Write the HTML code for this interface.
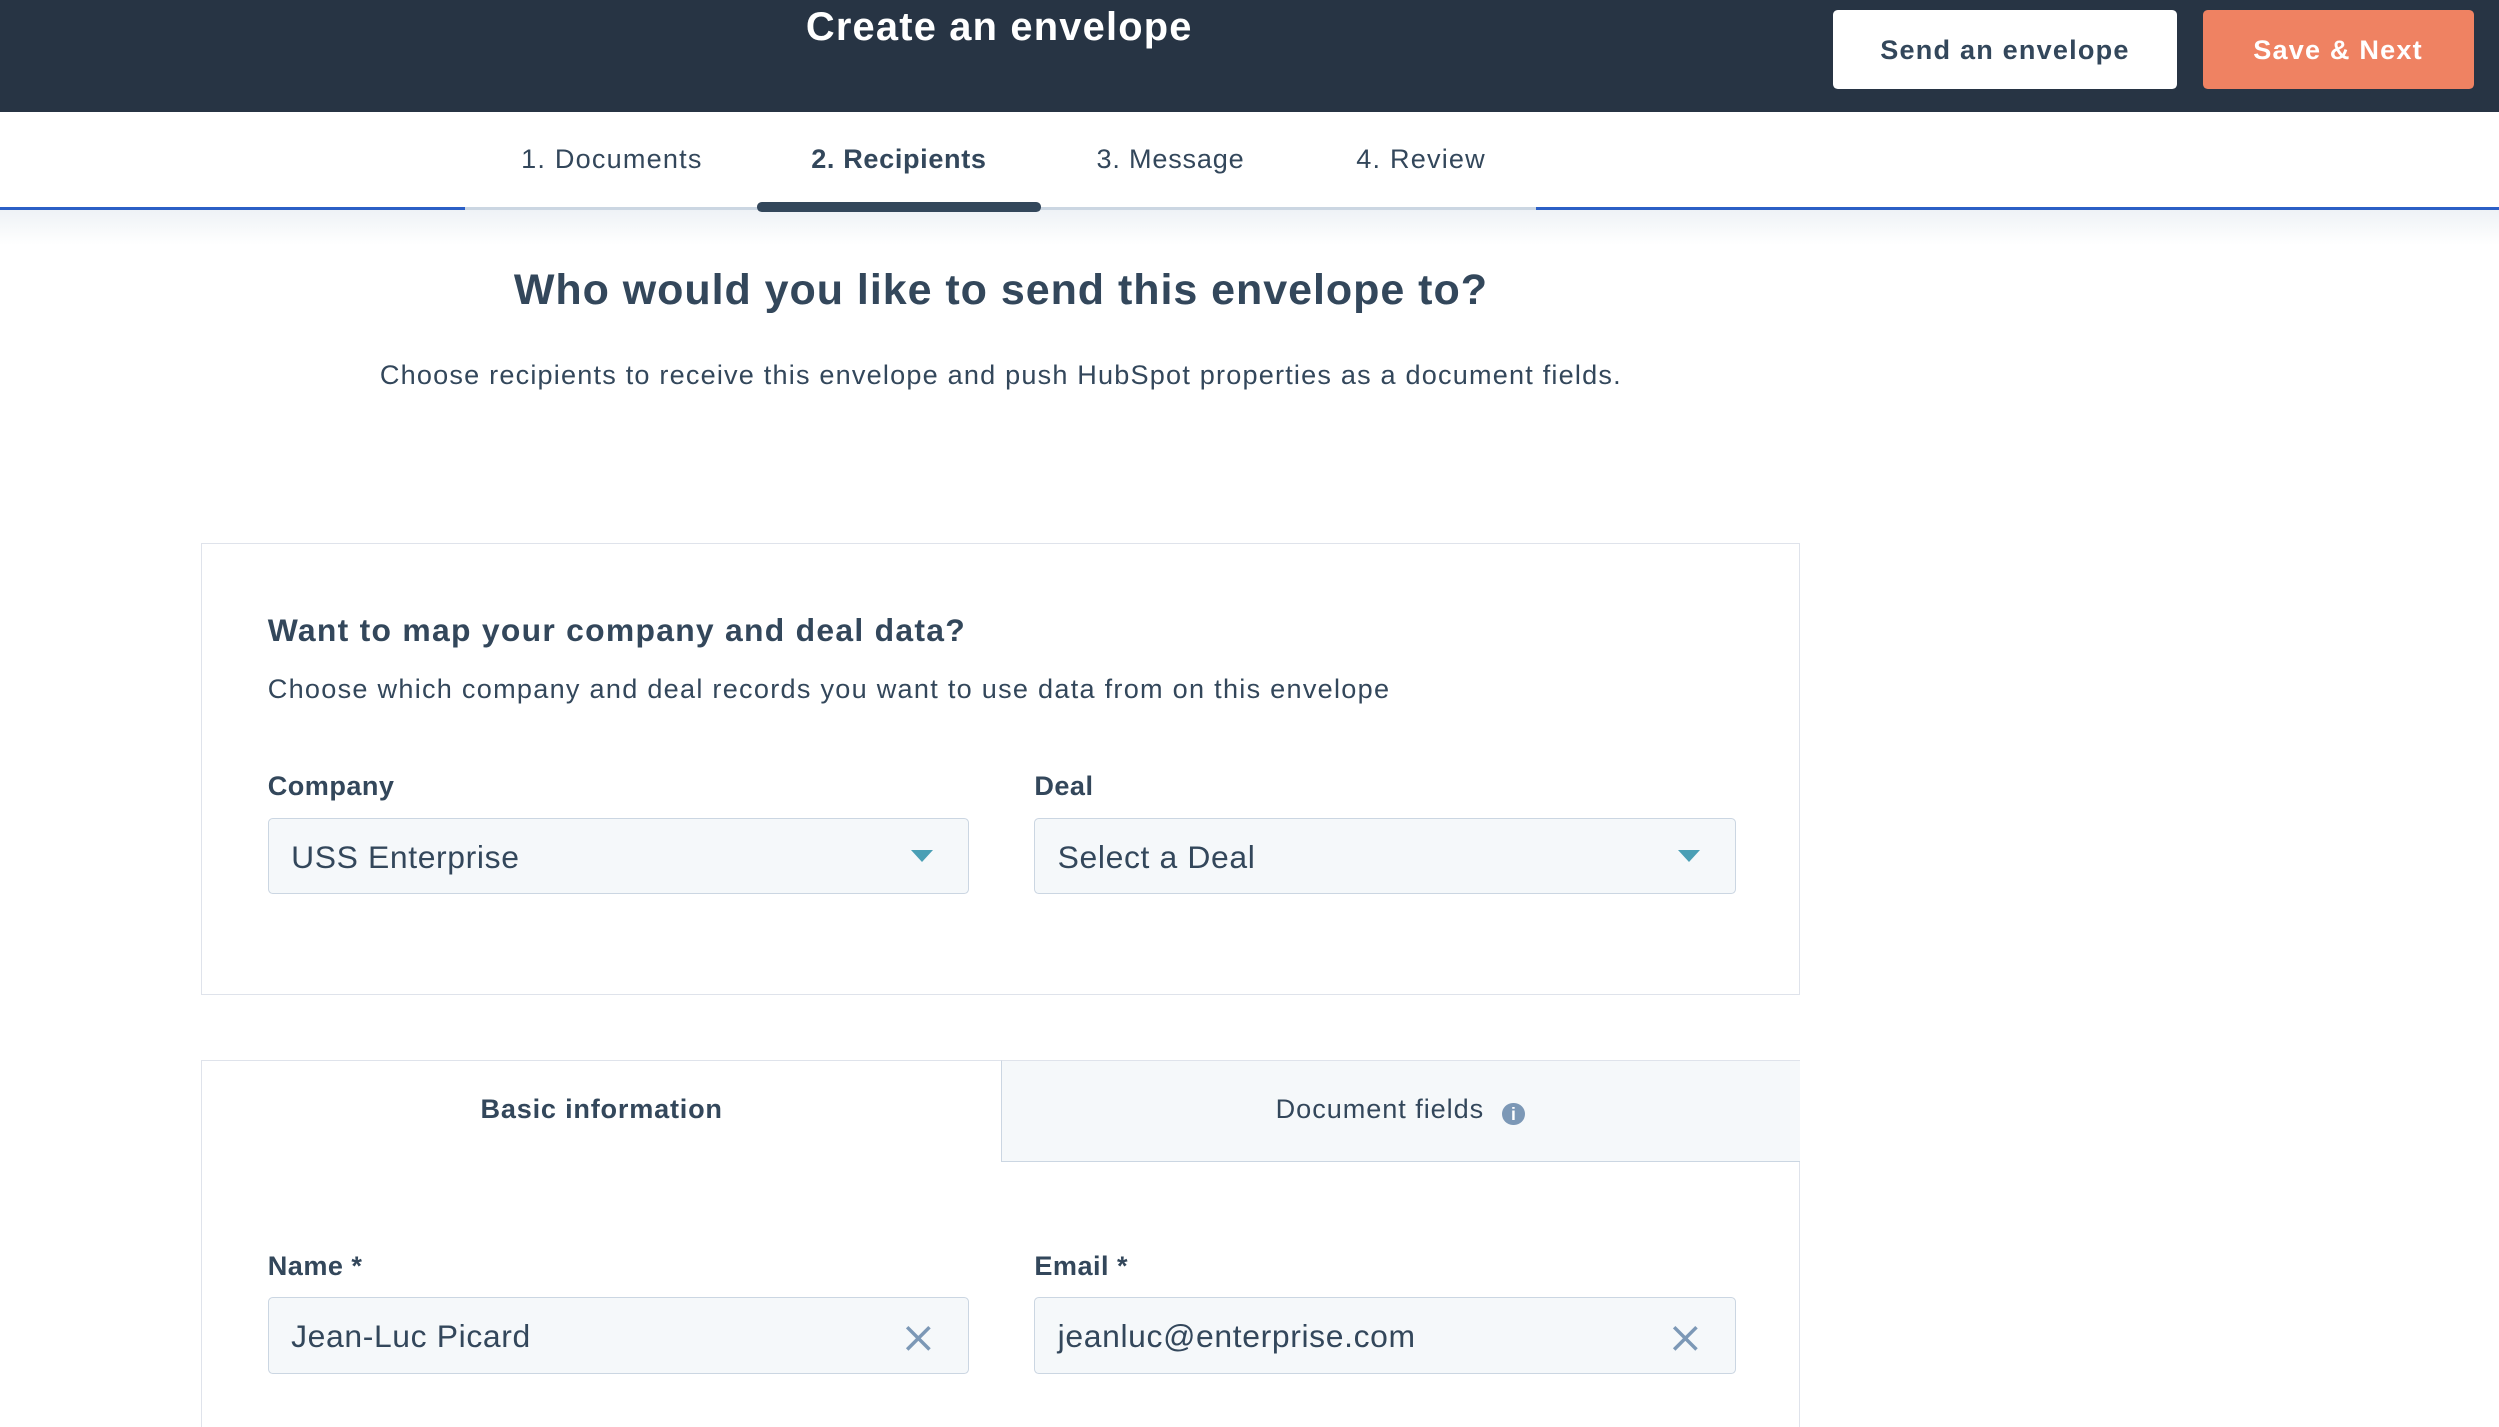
<!DOCTYPE html>
<html><head><meta charset="utf-8"><style>
html,body{margin:0;padding:0;}
body{width:2499px;height:1405px;overflow:hidden;background:#fff;font-family:"Liberation Sans",sans-serif;color:#33475b;letter-spacing:0.75px;}
#w{zoom:1.59375;width:1568px;height:882px;position:relative;}
.a{position:absolute;}
.hdr{left:0;top:0;width:1568px;height:70px;background:#273444;}
.btn{border-radius:3px;font-weight:bold;font-size:17px;text-align:center;line-height:50px;height:50px;top:6px;}
.tab{top:90px;font-size:17px;color:#33475b;}
.lbl{font-size:17px;font-weight:bold;color:#33475b;}
.inp{height:48px;background:#f5f8fa;border:1px solid #cbd6e2;border-radius:3px;font-size:20px;line-height:48px;text-indent:14px;color:#33475b;box-sizing:border-box;letter-spacing:0.4px;}
.tri{width:0;height:0;border-left:7px solid transparent;border-right:7px solid transparent;border-top:8px solid #4a9fb5;top:20px;right:22px;}
</style></head><body><div id="w">
<div class="a hdr"></div>
<div class="a" style="left:476px;top:3px;width:302px;text-align:center;color:#fff;font-size:25px;font-weight:bold;">Create an envelope</div>
<div class="a btn" style="left:1150px;width:216px;background:#fff;color:#33475b;">Send an envelope</div>
<div class="a btn" style="left:1382px;width:170px;background:#ef8262;color:#fff;">Save &amp; Next</div>

<div class="a tab" style="left:327px;">1. Documents</div>
<div class="a tab" style="left:509px;font-weight:bold;letter-spacing:0.4px;">2. Recipients</div>
<div class="a tab" style="left:688px;letter-spacing:0.5px;">3. Message</div>
<div class="a tab" style="left:851px;">4. Review</div>
<div class="a" style="left:0;top:132px;width:1568px;height:22px;background:linear-gradient(#eef2f6,#fff);"></div>
<div class="a" style="left:0;top:130px;width:292px;height:2px;background:#2b5fc6;"></div>
<div class="a" style="left:292px;top:130px;width:672px;height:2px;background:#cbd6e2;"></div>
<div class="a" style="left:964px;top:130px;width:604px;height:2px;background:#2b5fc6;"></div>
<div class="a" style="left:475px;top:127px;width:178px;height:6px;background:#33475b;border-radius:3px;"></div>

<div class="a" style="left:0;width:1256px;top:167px;text-align:center;font-size:27px;font-weight:bold;color:#33475b;letter-spacing:0.6px;">Who would you like to send this envelope to?</div>
<div class="a" style="left:0;width:1256px;top:225px;text-align:center;font-size:17px;letter-spacing:0.75px;">Choose recipients to receive this envelope and push HubSpot properties as a document fields.</div>

<div class="a" style="left:126px;top:341px;width:1002px;height:282px;border:1px solid #dfe3eb;"></div>
<div class="a" style="left:168px;top:384px;font-size:20px;font-weight:bold;letter-spacing:0.8px;">Want to map your company and deal data?</div>
<div class="a" style="left:168px;top:422px;font-size:17px;letter-spacing:0.8px;">Choose which company and deal records you want to use data from on this envelope</div>
<div class="a lbl" style="left:168px;top:483px;letter-spacing:0.3px;">Company</div>
<div class="a lbl" style="left:649px;top:483px;letter-spacing:0.3px;">Deal</div>
<div class="a inp" style="left:168px;top:513px;width:440px;">USS Enterprise<div class="a tri"></div></div>
<div class="a inp" style="left:649px;top:513px;width:440px;">Select a Deal<div class="a tri"></div></div>

<div class="a" style="left:126px;top:665px;width:1002px;height:230px;border:1px solid #dfe3eb;border-bottom:none;"></div>
<div class="a" style="left:628px;top:665px;width:501px;height:63px;background:#f5f8fa;border-left:1px solid #cbd6e2;border-bottom:1px solid #cbd6e2;border-top:1px solid #dfe3eb;"></div>
<div class="a" style="left:127px;width:501px;top:686px;text-align:center;font-size:17px;font-weight:bold;letter-spacing:0.5px;">Basic information</div>
<div class="a" style="left:628px;width:501px;top:686px;text-align:center;font-size:17px;letter-spacing:0.6px;">Document fields <span style="display:inline-block;width:14px;height:14px;border-radius:50%;background:#7c98b6;color:#fff;font-size:11px;line-height:14px;font-weight:bold;vertical-align:-1px;margin-left:6px;letter-spacing:0;">i</span></div>
<div class="a lbl" style="left:168px;top:784px;letter-spacing:0.3px;">Name *</div>
<div class="a lbl" style="left:649px;top:784px;letter-spacing:0.3px;">Email *</div>
<div class="a inp" style="left:168px;top:814px;width:440px;">Jean-Luc Picard
<svg class="a" style="right:22px;top:16px" width="18" height="18" viewBox="0 0 18 18"><path d="M2 2L16 16M16 2L2 16" stroke="#7c98b6" stroke-width="2.2"/></svg></div>
<div class="a inp" style="left:649px;top:814px;width:440px;">jeanluc@enterprise.com
<svg class="a" style="right:22px;top:16px" width="18" height="18" viewBox="0 0 18 18"><path d="M2 2L16 16M16 2L2 16" stroke="#7c98b6" stroke-width="2.2"/></svg></div>
</div></body></html>
